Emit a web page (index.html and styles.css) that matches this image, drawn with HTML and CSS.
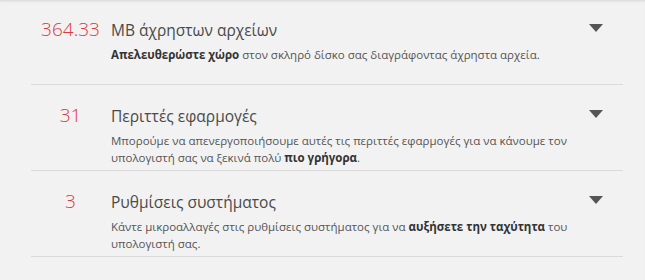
FILE: index.html
```html
<!DOCTYPE html>
<html lang="el">
<head>
<meta charset="utf-8">
<link rel="stylesheet" href="styles.css">
</head>
<body>
<div class="page">
  <ul class="list">
    <li class="item">
      <div class="num">364.33</div>
      <div class="title">MB άχρηστων αρχείων</div>
      <span class="caret"></span>
      <p class="desc"><b>Απελευθερώστε χώρο</b> στον σκληρό δίσκο σας διαγράφοντας άχρηστα αρχεία.</p>
    </li>
    <li class="item">
      <div class="num">31</div>
      <div class="title">Περιττές εφαρμογές</div>
      <span class="caret"></span>
      <p class="desc">Μπορούμε να απενεργοποιήσουμε αυτές τις περιττές εφαρμογές για να κάνουμε τον υπολογιστή σας να ξεκινά πολύ <b>πιο γρήγορα</b>.</p>
    </li>
    <li class="item">
      <div class="num">3</div>
      <div class="title">Ρυθμίσεις συστήματος</div>
      <span class="caret"></span>
      <p class="desc">Κάντε μικροαλλαγές στις ρυθμίσεις συστήματος για να <b>αυξήσετε την ταχύτητα</b> του υπολογιστή σας.</p>
    </li>
  </ul>
</div>
</body>
</html>
```
FILE: styles.css
```css
html, body {
  margin: 0;
  padding: 0;
  background: #f2f2f2;
}
body {
  font-family: "Open Sans", "Noto Sans", sans-serif;
  color: #444;
}
.page {
  height: 280px;
  box-shadow: inset 0 3px 3px -2px rgba(0,0,0,0.12);
  overflow: hidden;
}
.list {
  list-style: none;
  margin: -1px 22px 0 31px;
  padding: 0;
}
.item {
  display: grid;
  grid-template-columns: 80px 1fr 34px;
  grid-template-areas:
    "num title caret"
    ". desc .";
  grid-template-rows: auto 1fr;
  align-items: baseline;
  height: 86px;
  box-sizing: border-box;
  border-bottom: 1px solid #dadada;
  padding-top: 17px;
}
.num {
  grid-area: num;
  text-align: center;
  color: #dc3a40;
  font-size: 19px;
  font-weight: 300;
  line-height: 26px;
  padding-right: 1px;
}
.title {
  grid-area: title;
  font-size: 15.5px;
  line-height: 24px;
  color: #4a4a4a;
}
.desc {
  grid-area: desc;
  align-self: start;
  margin: 4px 0 0;
  font-size: 11.5px;
  line-height: 17px;
  color: #555;
}
.desc b {
  color: #333;
  font-weight: 700;
}
.caret {
  grid-area: caret;
  align-self: start;
  justify-self: start;
  margin-top: 8px;
  width: 0;
  height: 0;
  border-left: 7px solid transparent;
  border-right: 7px solid transparent;
  border-top: 8px solid #555;
}
```
